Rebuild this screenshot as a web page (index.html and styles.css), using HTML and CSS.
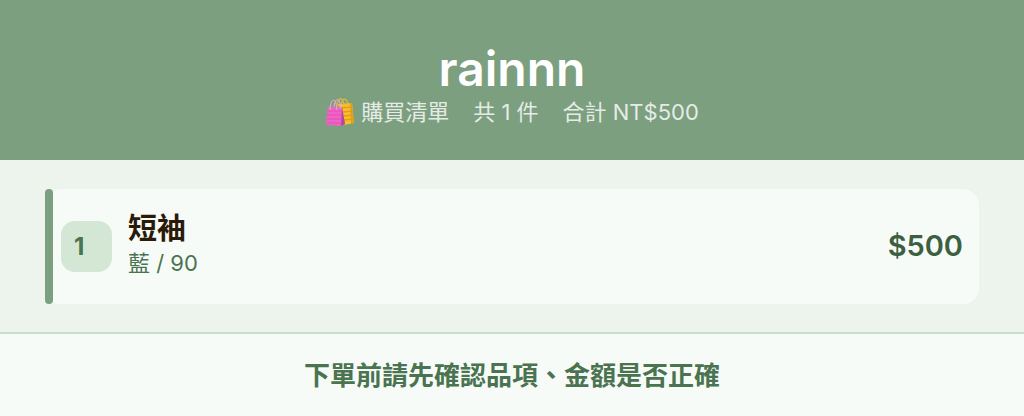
FILE: index.html
```html
<!DOCTYPE html>
<html lang="zh-Hant">
<head>
<meta charset="utf-8">
<meta name="viewport" content="width=device-width, initial-scale=1">
<title>rainnn 購買清單</title>
<link rel="stylesheet" href="styles.css">
</head>
<body>
<header class="header">
  <h1 class="title">rainnn</h1>
  <p class="summary">
    <span class="heading">
      <svg class="bags" viewBox="0 0 30 30" aria-hidden="true">
        <path d="M13 7 L27 6 L29 26 L19 28 Z" fill="#f6c02c"/>
        <path d="M25 6 L27 6 L29 26 L26 27 Z" fill="#dda11c"/>
        <path d="M14 11 L27 10 M18 15 L28 14 M19 19 L28 18 M19 23 L29 22" stroke="#e79b16" stroke-width="1.3"/>
        <path d="M12 9 C13 -1 18 0 19 8 M16 7 C18 0 22 1 23 8" fill="none" stroke="#d9b548" stroke-width="1.3"/>
        <path d="M3 10 L17 10 L20 27 L16 29 L1 28 Z" fill="#f062c6"/>
        <path d="M17 10 L20 27 L16 29 Z" fill="#b04a9c"/>
        <path d="M3 14 L16 14 M2 18 L16 18 M2 22 L16 22 M2 26 L16 26" stroke="#e24fb4" stroke-width="1"/>
        <path d="M5 13 C6 0 11 0 12 13 M9 10 C10 0 15 0 16 12" fill="none" stroke="#dcaabb" stroke-width="1.2"/>
      </svg>
      購買清單
    </span>
    <span>共 1 件</span>
    <span>合計 NT$500</span>
  </p>
</header>
<main class="list">
  <article class="item">
    <span class="number">1</span>
    <div class="details">
      <h2 class="name">短袖</h2>
      <p class="variant">藍 / 90</p>
    </div>
    <strong class="price">$500</strong>
  </article>
</main>
<footer class="footer">
  <p class="notice">下單前請先確認品項、金額是否正確</p>
</footer>
</body>
</html>
```
FILE: styles.css
```css
* {
  box-sizing: border-box;
}

body {
  margin: 0;
  background: #f6fbf8;
  font-family: Inter, "Noto Sans CJK TC", sans-serif;
}

h1,
h2,
p {
  margin: 0;
}

.header {
  padding: 41px 44px 32px;
  background: #7c9f80;
  color: #fff;
  text-align: center;
}

.title {
  font-size: 48px;
  line-height: 55px;
  font-weight: 600;
}

.summary {
  display: flex;
  justify-content: center;
  align-items: center;
  gap: 24px;
  font-size: 22px;
  line-height: 32px;
  color: #e5ece6;
}

.heading {
  display: flex;
  align-items: center;
  gap: 6px;
}

.bags {
  width: 30px;
  height: 30px;
}

.list {
  padding: 29px 45px 28px;
  background: #edf3ed;
}

.item {
  position: relative;
  display: flex;
  align-items: center;
  gap: 16px;
  padding: 20px 16px;
  border-radius: 16px;
  background: #f6fbf8;
}

.item::before {
  content: "";
  position: absolute;
  inset: 0 auto 0 0;
  width: 8px;
  border-radius: 4px;
  background: #7c9f80;
}

.number {
  width: 51px;
  padding: 0 13px;
  border-radius: 14px;
  background: #d4e7d5;
  color: #4a7350;
  font-size: 24px;
  line-height: 51px;
  font-weight: 700;
}

.details {
  flex: 1;
  padding-bottom: 7px;
}

.name {
  font-size: 29px;
  line-height: 40px;
  font-weight: 700;
  color: #2a1a08;
}

.variant {
  font-size: 22px;
  line-height: 28px;
  color: #4a7350;
}

.price {
  padding-bottom: 2px;
  font-size: 29px;
  line-height: 40px;
  font-weight: 600;
  color: #3d5f41;
}

.footer {
  padding: 23px 44px 21px;
  border-top: 2px solid #c8decd;
  text-align: center;
}

.notice {
  font-size: 26px;
  line-height: 38px;
  font-weight: 700;
  color: #4a7350;
}
```
